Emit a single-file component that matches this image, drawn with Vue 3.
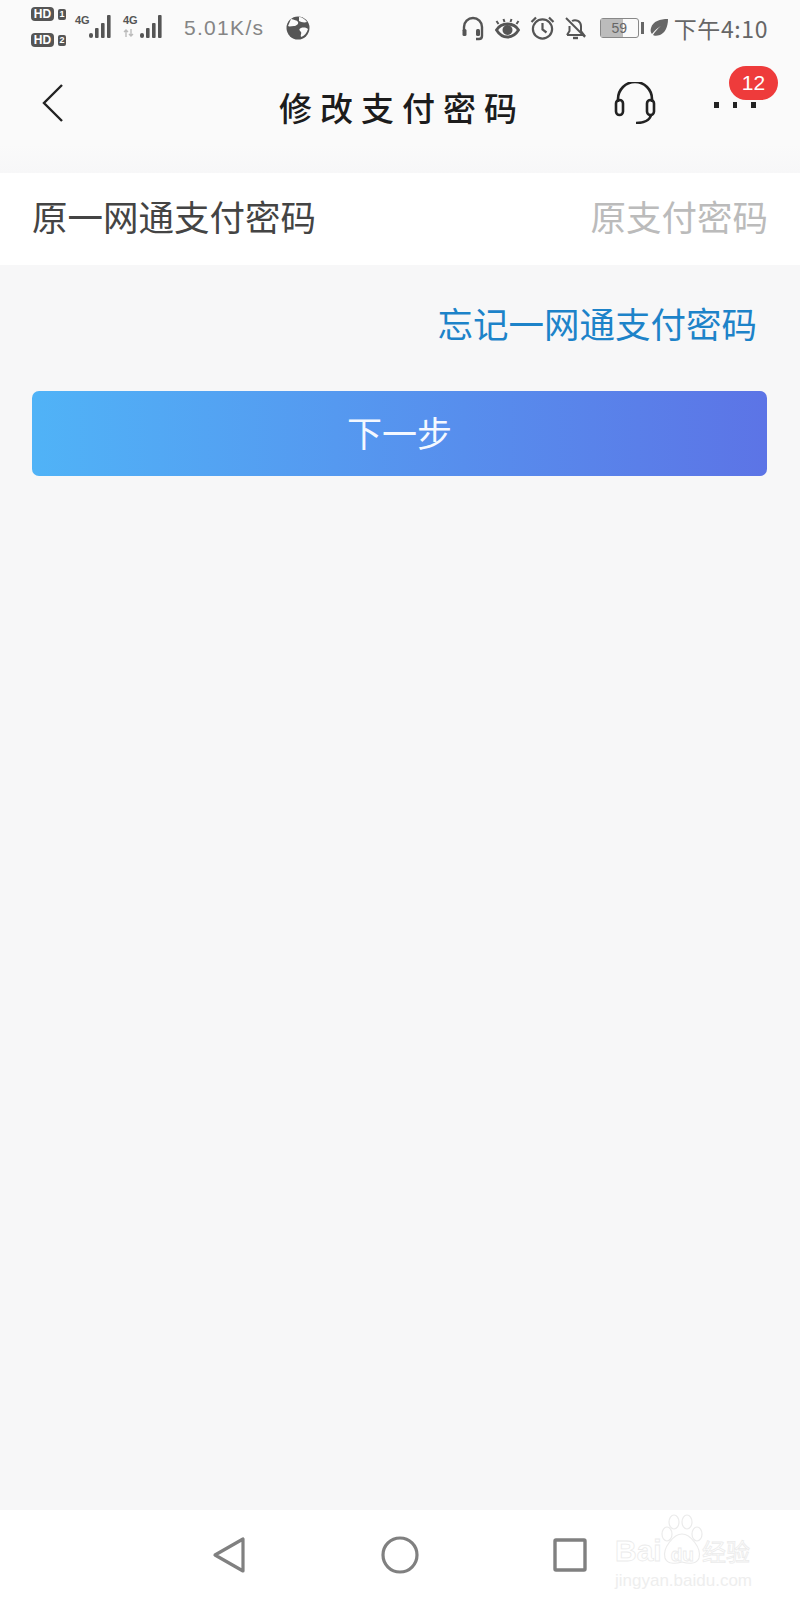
<template>
  <div class="page">
    <div class="status-bar">
      <div class="status-left">
        <div class="hd-col">
          <div v-for="n in 2" :key="n" class="hd-row">
            <span class="hd-pill">HD</span>
            <span class="hd-num">{{ n }}</span>
          </div>
        </div>
        <div v-for="(s, i) in signals" :key="i" class="signal">
          <span class="signal-type">4G</span>
          <svg v-if="i === 1" class="arrows" width="12" height="8" viewBox="0 0 12 8">
            <path d="M3 8V1M1 3l2-2 2 2M8 0v7M6 5l2 2 2-2" fill="none" stroke="#bbb" stroke-width="1.4" />
          </svg>
          <svg class="bars" :class="{ second: i === 1 }" width="26" height="25" viewBox="0 0 26 25">
            <rect x="0" y="19" width="4" height="5" rx="2" fill="#555" />
            <rect x="6" y="14" width="3.6" height="10" rx="1" fill="#555" />
            <rect x="12" y="9" width="3.6" height="15" rx="1" fill="#555" />
            <rect x="18" y="1" width="3.6" height="23" rx="1" fill="#555" />
          </svg>
        </div>
        <span class="speed">5.01K/s</span>
        <svg class="globe" width="24" height="24" viewBox="0 0 24 24">
          <circle cx="12" cy="12" r="11.5" fill="#555" />
          <path d="M5 3c3 1 6 1 7 3s-2 4-4 4-5 1-6 0zM15 12c3-1 6 0 7 1-1 4-4 7-7 8-1-2 1-4 0-5s-3-3 0-4zM13 1c3 0 6 2 8 5-3 1-6 0-8-1z" fill="#fafafa" />
        </svg>
      </div>
      <div class="status-right">
        <svg width="24" height="25" viewBox="0 0 24 25" fill="none" stroke="#555" stroke-width="2.4">
          <path d="M3 15V11a9 9 0 0 1 18 0v9c0 2-1 3-3 3h-3" />
          <rect x="1.5" y="13" width="4" height="7" rx="1.5" fill="#555" stroke="none" />
          <rect x="15" y="13" width="4" height="7" rx="1.5" fill="#555" stroke="none" />
        </svg>
        <svg width="27" height="21" viewBox="0 0 26 21" fill="none" stroke="#555" stroke-width="2.8">
          <path d="M2 12c3-5 7-6 11-6s8 1 11 6c-3 5-7 7-11 7s-8-2-11-7z" />
          <circle cx="13" cy="12" r="5" fill="#555" stroke="none" />
          <path d="M4 6 2 3M10 4 9 1M16 4l1-3M22 6l2-3" stroke-width="2" />
        </svg>
        <svg width="25" height="24" viewBox="0 0 25 24" fill="none" stroke="#555" stroke-width="2.2">
          <circle cx="12.5" cy="13" r="9.6" />
          <path d="M12.5 7v6.5l4 3M1.5 6 6 1.5M23.5 6 19 1.500" />
        </svg>
        <svg width="23" height="23" viewBox="0 0 23 23" fill="none" stroke="#555" stroke-width="2">
          <path d="M3 18h17l-3-4V9a6 6 0 0 0-9-5M5.500 9v5L3 18" />
          <path d="M2 1l19 19" />
          <path d="M9 21h5" stroke-width="2.400" />
        </svg>
        <div class="battery">
          <div class="battery-body">
            <div class="battery-fill" :style="{ width: batteryLevel + '%' }"></div>
            <span class="battery-text">{{ batteryLevel }}</span>
          </div>
          <div class="battery-tip"></div>
        </div>
        <svg class="leaf" width="18" height="18" viewBox="0 0 18 18">
          <path d="M18 0C10 0 3 2 1 9c-1 3 0 5 1 6 4-5 7-7 9-8-3 2-6 6-8 9 1 1 4 1 7 0 5-2 8-8 8-16z" fill="#666" />
        </svg>
        <span class="clock">下午4:10</span>
      </div>
    </div>

    <header class="title-bar">
      <svg class="back" width="22" height="38" viewBox="0 0 22 38" fill="none" stroke="#222" stroke-width="2.400">
        <path d="M20 1 2 19l18 18" />
      </svg>
      <h1 class="title">修改支付密码</h1>
      <div class="actions">
        <svg class="headset" width="42" height="42" viewBox="0 0 42 42" fill="none" stroke="#222" stroke-width="2.600">
          <path d="M4 20v-3a17 17 0 0 1 34 0v3" />
          <rect x="2" y="18" width="7" height="15" rx="3.500" />
          <rect x="33" y="18" width="7" height="15" rx="3.500" />
          <path d="M37 33c-1 5-7 8-15 8" />
        </svg>
        <div class="more">
          <i></i><i></i><i></i>
          <span class="badge">12</span>
        </div>
      </div>
    </header>

    <div class="field">
      <span class="field-label">原一网通支付密码</span>
      <span class="field-hint">原支付密码</span>
    </div>

    <a class="forgot">忘记一网通支付密码</a>

    <button class="next">下一步</button>

    <div class="filler"></div>

    <nav class="nav-bar">
      <svg width="34" height="38" viewBox="0 0 34 38" fill="none" stroke="#808080" stroke-width="3.200" stroke-linejoin="round">
        <path d="M31 3v32L3 19z" />
      </svg>
      <svg width="38" height="38" viewBox="0 0 38 38" fill="none" stroke="#808080" stroke-width="3.200">
        <circle cx="19" cy="19" r="17" />
      </svg>
      <svg width="34" height="34" viewBox="0 0 34 34" fill="none" stroke="#808080" stroke-width="3.400" stroke-linejoin="round">
        <rect x="2" y="2" width="30" height="30" rx="1" />
      </svg>
      <div class="watermark">
        <svg class="paw" width="42" height="54" viewBox="0 0 42 54" fill="none" stroke="#ebebeb" stroke-width="1.200">
          <ellipse cx="13" cy="8" rx="5" ry="7" />
          <ellipse cx="26" cy="8" rx="5" ry="7" />
          <ellipse cx="36" cy="20" rx="5" ry="7" />
          <ellipse cx="6" cy="20" rx="5" ry="7" />
          <path d="M21 20C13 20 1 34 4 44c2 6 10 6 17 4 7 2 15 2 17-4 3-10-9-24-17-24z" />
        </svg>
        <div class="wm-top">
          <span class="wm-bai">Bai</span>
          <span class="wm-du">du</span>
          <span class="wm-cn">经验</span>
        </div>
        <div class="wm-url">jingyan.baidu.com</div>
      </div>
    </nav>
  </div>
</template>

<script setup>
const signals = [1, 2]
const batteryLevel = 59
</script>

<style>
html,
body {
  margin: 0;
  background: #f7f7f8;
}
</style>

<style scoped>
.page {
  width: 800px;
  height: 1600px;
  display: flex;
  flex-direction: column;
  background: #f7f7f8;
  font-family: "Noto Sans CJK SC", "Liberation Sans", sans-serif;
  overflow: hidden;
}

.status-bar {
  height: 60px;
  display: flex;
  justify-content: space-between;
  background: #fafafa;
  color: #666;
  flex-shrink: 0;
}

.status-left {
  display: flex;
  align-items: flex-start;
  padding-left: 31px;
}

.hd-col {
  display: flex;
  flex-direction: column;
  gap: 12px;
  padding-top: 7px;
  width: 44px;
}

.hd-row {
  display: flex;
  align-items: center;
  gap: 4px;
}

.hd-pill {
  width: 23px;
  height: 14px;
  background: #555;
  color: #fff;
  border-radius: 4px;
  font: 700 12px/14px "Liberation Sans", sans-serif;
  text-align: center;
}

.hd-num {
  width: 8px;
  height: 11px;
  background: #555;
  color: #fff;
  border-radius: 2px;
  font: 700 9px/11px "Liberation Sans", sans-serif;
  text-align: center;
}

.signal {
  position: relative;
  width: 48px;
  height: 38px;
  display: flex;
  padding-top: 14px;
  box-sizing: border-box;
}

.signal-type {
  font: 700 11px/12px "Liberation Sans", sans-serif;
  color: #555;
  width: 14px;
}

.arrows {
  position: absolute;
  left: 0;
  top: 29px;
}

.bars {
  margin-left: 0;
}

.bars.second {
  margin-left: 3px;
}

.speed {
  margin: 13px 0 0 13px;
  font: 400 21px/30px "Liberation Sans", sans-serif;
  letter-spacing: 1.300px;
  color: #858585;
}

.globe {
  margin: 16px 0 0 22px;
}

.status-right {
  display: flex;
  align-items: center;
  height: 56px;
  padding-right: 32px;
}

.status-right svg {
  margin-right: 9px;
}

.battery {
  display: flex;
  align-items: center;
  margin: 0 6px 0 4px;
}

.battery-body {
  position: relative;
  width: 39px;
  height: 20px;
  border: 1px solid #888;
  border-radius: 3px;
  box-sizing: border-box;
}

.battery-fill {
  height: 100%;
  background: #bcbcbc;
}

.battery-text {
  position: absolute;
  inset: 0;
  font: 400 14px/18px "Liberation Sans", sans-serif;
  text-align: center;
  color: #666;
}

.battery-tip {
  width: 3px;
  height: 12px;
  margin-left: 2px;
  background: #666;
}

.status-right .leaf {
  margin-right: 6px;
}

.clock {
  font-size: 23px;
  line-height: 30px;
  color: #666;
  letter-spacing: 0.600px;
}

.title-bar {
  position: relative;
  height: 113px;
  display: flex;
  align-items: center;
  justify-content: space-between;
  padding: 0 44px 28px 42px;
  box-sizing: border-box;
  background: linear-gradient(#fafafa 75%, #f7f7f8);
  flex-shrink: 0;
}

.title {
  position: absolute;
  left: 0;
  right: 0;
  top: 25px;
  margin: 0 0 0 4px;
  text-align: center;
  font-size: 33px;
  line-height: 44px;
  font-weight: 500;
  letter-spacing: 8px;
  color: #1c1c1c;
}

.actions {
  display: flex;
  align-items: center;
}

.more {
  position: relative;
  display: flex;
  gap: 14px;
  width: 42px;
  margin: 4px 0 0 58px;
}

.more i {
  width: 5px;
  height: 6px;
  background: #222;
}

.badge {
  position: absolute;
  left: 15px;
  top: -36px;
  width: 49px;
  height: 34px;
  border-radius: 17px;
  background: #ee3b3b;
  color: #fff;
  font: 400 21px/34px "Liberation Sans", sans-serif;
  text-align: center;
}

.field {
  height: 92px;
  display: flex;
  align-items: center;
  justify-content: space-between;
  padding: 0 32px 7px;
  box-sizing: border-box;
  background: #fff;
  font-size: 35.500px;
  flex-shrink: 0;
}

.field-label {
  color: #444;
}

.field-hint {
  color: #bbb;
}

.forgot {
  align-self: flex-end;
  margin: 34px 43px 0 0;
  font-size: 35.500px;
  line-height: 48px;
  color: #1d83c9;
}

.next {
  margin: 44px 33px 0 32px;
  height: 85px;
  padding-bottom: 6px;
  flex-shrink: 0;
  border: none;
  border-radius: 7px;
  background: linear-gradient(90deg, #50b3f7, #5c74e6);
  color: #f4f8ff;
  font-family: inherit;
  font-size: 35px;
}

.filler {
  flex: 1;
}

.nav-bar {
  position: relative;
  height: 90px;
  display: flex;
  align-items: flex-start;
  padding: 26px 0 0 212px;
  box-sizing: border-box;
  background: #fff;
  flex-shrink: 0;
}

.nav-bar > svg:nth-child(2) {
  margin: 0 0 0 135px;
}

.nav-bar > svg:nth-child(3) {
  margin: 2px 0 0 134px;
}

.watermark {
  position: absolute;
  left: 615px;
  top: 4px;
  width: 145px;
  height: 80px;
}

.paw {
  position: absolute;
  left: 46px;
  top: 0;
}

.wm-top {
  position: absolute;
  left: 0;
  top: 20px;
  width: 140px;
  display: flex;
  align-items: baseline;
  color: #fff;
  -webkit-text-stroke: 0.800px #ebebeb;
}

.wm-bai {
  font: 700 30px/34px "Liberation Sans", sans-serif;
}

.wm-du {
  margin-left: 9px;
  font: 700 19px/34px "Liberation Sans", sans-serif;
}

.wm-cn {
  margin-left: 8px;
  font-size: 24px;
  line-height: 34px;
}

.wm-url {
  position: absolute;
  left: 0;
  top: 56px;
  font: 400 17px/22px "Liberation Sans", sans-serif;
  color: #eeeeee;
  white-space: nowrap;
}
</style>
